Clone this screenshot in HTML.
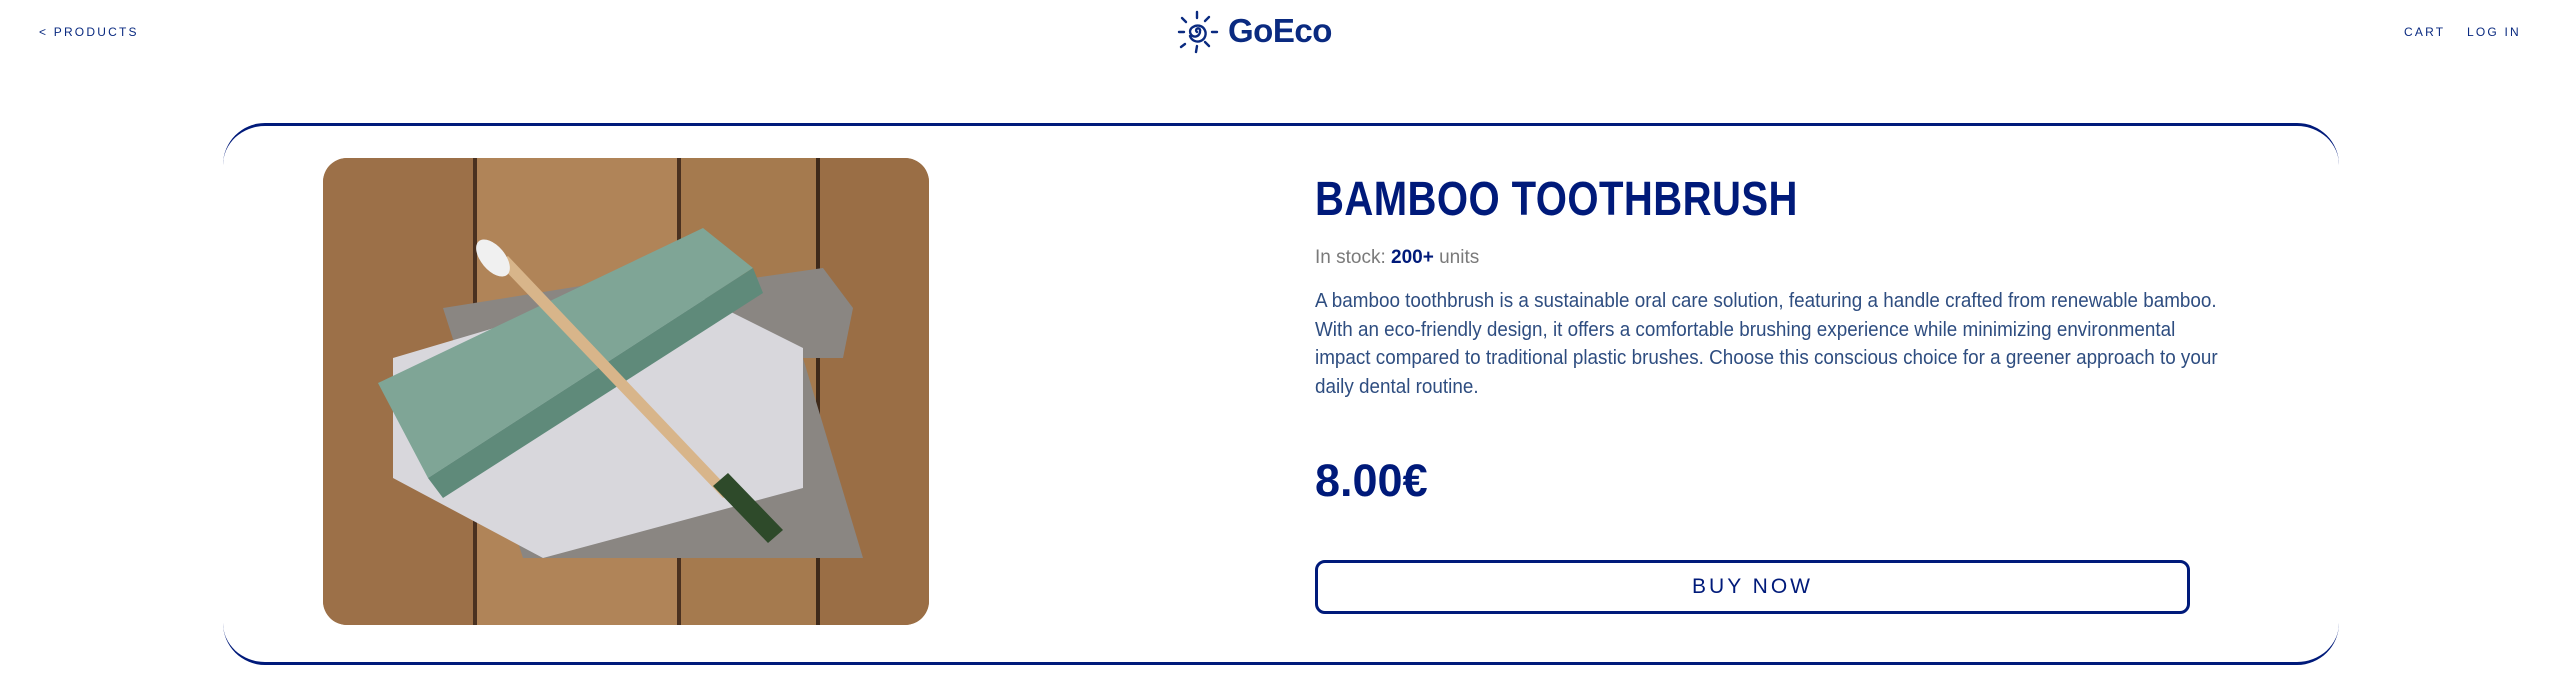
<!DOCTYPE html>
<html><head><meta charset="utf-8"><style>
*{margin:0;padding:0;box-sizing:border-box}
body{width:2560px;height:700px;background:#fff;font-family:"Liberation Sans",sans-serif;color:#001a7a;position:relative;overflow:hidden}
.nav{position:absolute;top:25px;font-size:12px;letter-spacing:2.2px;color:#0a2a80;font-family:"Liberation Sans",sans-serif}
.card{position:absolute;left:223px;top:123px;width:2116px;height:542px;border-top:3px solid #001a7a;border-bottom:3px solid #001a7a;border-radius:42px}
.img{position:absolute;left:323px;top:158px;width:606px;height:467px;border-radius:24px;overflow:hidden}
h1{position:absolute;left:1315px;top:172px;font:bold 48px "Liberation Sans",sans-serif;transform:scaleX(0.835);transform-origin:left top;color:#001a7a;white-space:nowrap;letter-spacing:0.5px}
.stock{position:absolute;left:1315px;top:247px;font:19px "Liberation Sans",sans-serif;color:#7a7a7a}
.stock b{color:#001a7a}
.desc{position:absolute;left:1315px;top:287px;font:20.5px/28.5px "Liberation Sans",sans-serif;color:#2e4d80;transform:scaleX(0.92);transform-origin:left top;width:1000px}
.price{position:absolute;left:1315px;top:455px;font:bold 45px "Liberation Sans",sans-serif;color:#001a7a}
.btn{position:absolute;left:1315px;top:560px;width:875px;height:54px;border:3px solid #001a7a;border-radius:10px;text-align:center;font:21px/48px "Liberation Sans",sans-serif;letter-spacing:3px;color:#001a7a}
</style></head><body>
<div class="nav" style="left:39px">&lt; PRODUCTS</div>
<div class="nav" style="left:2404px">CART</div>
<div class="nav" style="left:2467px">LOG IN</div>
<svg style="position:absolute;left:1176px;top:10px" width="46" height="44" viewBox="0 0 46 44">
<g stroke="#0a2a80" stroke-width="2.4" stroke-linecap="round" fill="none">
<line x1="21" y1="2" x2="21" y2="8"/><line x1="33" y1="7" x2="29" y2="11"/><line x1="36" y1="22" x2="41" y2="22"/>
<line x1="29" y1="32" x2="33" y2="36"/><line x1="21" y1="36" x2="20" y2="42"/><line x1="9" y1="34" x2="5" y2="37"/>
<line x1="3" y1="22" x2="8" y2="22"/><line x1="10" y1="12" x2="6" y2="8"/>
<path d="M21 22 a2 2 0 1 1 3 -1 a5 5 0 1 1 -7 -4 a8 8 0 1 1 -3 9"/>
</g></svg>
<div style="position:absolute;left:1228px;top:12px;font:bold 33px 'Liberation Sans',sans-serif;color:#0a2a80;letter-spacing:-0.5px">GoEco</div>
<div class="card"></div>
<div class="img">
<svg width="606" height="467" viewBox="0 0 606 467">
<rect width="606" height="467" fill="#a87c50"/>
<rect x="0" width="150" height="467" fill="#9c7048"/>
<rect x="150" width="4" height="467" fill="#4a3120"/>
<rect x="154" width="200" height="467" fill="#b08458"/>
<rect x="354" width="4" height="467" fill="#4a3120"/>
<rect x="358" width="135" height="467" fill="#a57a4e"/>
<rect x="493" width="4" height="467" fill="#3f2a1a"/>
<rect x="497" width="109" height="467" fill="#9a6e45"/>
<path d="M120 150 L370 110 L430 120 L500 110 L530 150 L520 200 L480 200 L540 400 L200 400 Z" fill="#8a8682"/>
<path d="M70 200 L340 120 L480 190 L480 330 L220 400 L70 320 Z" fill="#d8d7dc"/>
<path d="M55 225 L380 70 L430 110 L105 320 Z" fill="#7fa596"/>
<path d="M105 320 L430 110 L440 135 L120 340 Z" fill="#5f8a7a"/>
<path d="M175 105 L400 340 L410 335 L185 98 Z" fill="#d8b58a"/>
<path d="M390 328 L445 385 L460 372 L405 315 Z" fill="#2e4a2a"/>
<ellipse cx="170" cy="100" rx="12" ry="22" fill="#f0f0f0" transform="rotate(-40 170 100)"/>
</svg></div>
<h1>BAMBOO TOOTHBRUSH</h1>
<div class="stock">In stock: <b>200+</b> units</div>
<div class="desc">A bamboo toothbrush is a sustainable oral care solution, featuring a handle crafted from renewable bamboo. With an eco-friendly design, it offers a comfortable brushing experience while minimizing environmental impact compared to traditional plastic brushes. Choose this conscious choice for a greener approach to your daily dental routine.</div>
<div class="price">8.00€</div>
<div class="btn">BUY NOW</div>
</body></html>
